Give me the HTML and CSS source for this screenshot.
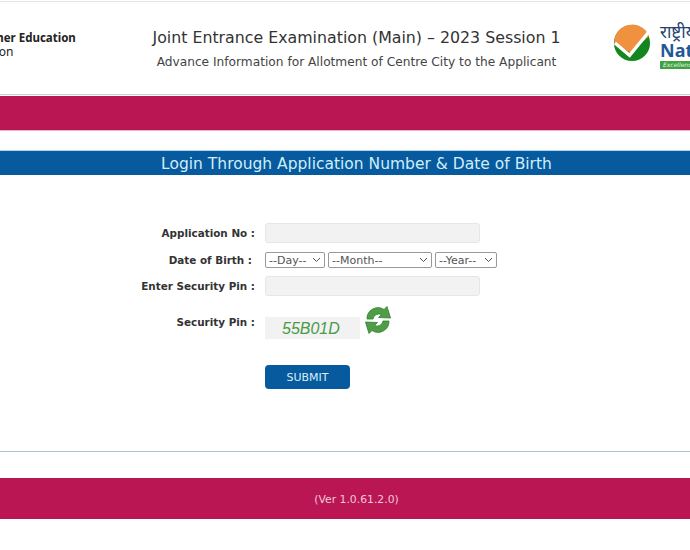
FILE: index.html
```html
<!DOCTYPE html>
<html lang="en">
<head>
  <meta charset="UTF-8">
  <title>JEE (Main) 2023 Session 1</title>
  <link rel="stylesheet" href="styles.css">
</head>

<body>

  <header class="top-header">
    <div class="ministry">
      <div class="ministry-text">
        <div class="dept">Department of Higher Education</div>
        <div class="min">Ministry of Education</div>
      </div>
    </div>
    <div class="exam-title">
      <h1>Joint Entrance Examination (Main) – 2023 Session 1</h1>
      <p>Advance Information for Allotment of Centre City to the Applicant</p>
    </div>
    <div class="nta-logo">
      <svg class="nta-mark" viewBox="0 0 40 40" width="38" height="38">
        <circle cx="20" cy="20" r="19" fill="#14861f"/>
        <path d="M1.200 19.500 A19 19 0 0 1 38 13 L18 30 Z" fill="#f0913f"/>
        <path d="M2 20 L17.500 33 L38 8" fill="none" stroke="#fff" stroke-width="3.400"/>
      </svg>
      <div class="nta-text">
        <div class="nta-hindi">राष्ट्रीय परीक्षा</div>
        <div class="nta-name">National Testing</div>
        <div class="nta-tag">Excellence in Assessment</div>
      </div>
    </div>
  </header>

  <div class="pink-bar"></div>

  <div class="login-title">Login Through Application Number &amp; Date of Birth</div>

  <form class="login-form">
    <div class="form-row">
      <label>Application No :</label>
      <input type="text" class="text-box">
    </div>
    <div class="form-row row-dob">
      <label class="label-dob">Date of Birth :</label>
      <div class="dob-selects">
        <select class="sel-day"><option>--Day--</option></select>
        <select class="sel-month"><option>--Month--</option></select>
        <select class="sel-year"><option>--Year--</option></select>
      </div>
    </div>
    <div class="form-row">
      <label>Enter Security Pin :</label>
      <input type="text" class="text-box">
    </div>
    <div class="form-row row-captcha">
      <label>Security Pin :</label>
      <div class="captcha">55B01D</div>
      <svg class="refresh" viewBox="0 0 28 28" width="28" height="28">
        <path d="M3 13 A11 11 0 0 1 20 3.500 L23 .5 L26.500 12 L14.500 11.500 L17.500 8.500 A6 6 0 0 0 9 13 Z" fill="#4f9e46" stroke="#2f7d32" stroke-width=".8"/>
        <path d="M25 15 A11 11 0 0 1 8 24.500 L5 27.500 L1.500 16 L13.500 16.500 L10.500 19.500 A6 6 0 0 0 19 15 Z" fill="#4f9e46" stroke="#2f7d32" stroke-width=".8"/>
      </svg>
    </div>
    <div class="form-row row-submit">
      <label></label>
      <button type="button" class="submit-btn">SUBMIT</button>
    </div>
  </form>

  <hr class="form-end">

  <div class="footer">(Ver 1.0.61.2.0)</div>

</body>
</html>
```

FILE: styles.css
```css
html, body {
  overflow: hidden;
}

body {
  font-family: 'DejaVu Sans', Verdana, sans-serif;
  background: #fff;
  margin: 0;
  padding: 0;
  color: #333;
}

.top-header {
  display: flex;
  height: 92px;
  margin-top: 1px;
  border-top: 1px solid #e4e4e4;
  border-bottom: 1px solid #ccc;
}

.ministry {
  width: 77px;
  overflow: hidden;
}

.ministry-text {
  margin: 29px 0 0 -111px;
  width: 200px;
  font-family: 'Noto Sans', sans-serif;
  font-size: 11.5px;
  line-height: 14px;
  color: #222;
}

.dept {
  font-weight: bold;
}

.min {
  margin-left: 5px;
  font-size: 12px;
}

.exam-title {
  width: 483px;
  margin-left: 38px;
  padding-top: 26px;
  text-align: center;
}

.exam-title h1 {
  margin: 0;
  font-size: 15.8px;
  font-weight: normal;
  line-height: 20px;
  color: #333;
}

.exam-title p {
  margin: 6px 0 0;
  font-size: 12.2px;
  line-height: 16px;
  color: #444;
}

.nta-logo {
  flex: 1;
  display: flex;
  min-width: 0;
  overflow: hidden;
  margin-left: 15px;
  padding-top: 21px;
}

.nta-mark {
  flex: none;
  margin: 1px 9px 0 0;
}

.nta-text {
  flex: none;
  white-space: nowrap;
}

.nta-hindi {
  font-family: 'Noto Sans', sans-serif;
  font-size: 17px;
  line-height: 17px;
  color: #24426e;
}

.nta-name {
  font-family: 'Noto Sans', sans-serif;
  font-size: 18px;
  font-weight: bold;
  line-height: 20px;
  color: #1f5a96;
}

.nta-tag {
  margin-top: 1px;
  width: 120px;
  background: #3fa142;
  color: #e8f5e4;
  font-size: 6px;
  font-style: italic;
  line-height: 8px;
  padding-left: 3px;
}

.pink-bar {
  height: 34px;
  margin-top: 1px;
  background: #bb1654;
  border-bottom: 1px solid #e9b3c8;
}

.login-title {
  margin-top: 19px;
  height: 24px;
  line-height: 26px;
  padding-left: 23px;
  background: #075a9e;
  border-top: 1px solid #a9d8ee;
  color: #cfeefa;
  text-align: center;
  font-size: 15.5px;
}

.login-form {
  padding-top: 48px;
  height: 228px;
}

.form-row {
  display: flex;
  align-items: center;
  margin-bottom: 9px;
}

.form-row label {
  flex: none;
  width: 255px;
  margin-right: 10px;
  text-align: right;
  font-size: 10.4px;
  font-weight: bold;
  color: #333;
}

.form-row .label-dob {
  width: 252px;
  margin-right: 13px;
}

.row-dob {
  margin-bottom: 8px;
}

.text-box {
  width: 215px;
  height: 20px;
  box-sizing: border-box;
  border: 1px solid #e6e6e6;
  border-radius: 3px;
  background: #f2f2f2;
}

.dob-selects {
  display: flex;
  gap: 3px;
}

.dob-selects select {
  appearance: none;
  height: 16px;
  padding: 0 0 0 3px;
  box-sizing: border-box;
  border: 1px solid #999;
  border-radius: 2px;
  background: #fff url("data:image/svg+xml,%3Csvg xmlns='http://www.w3.org/2000/svg' width='9' height='6'%3E%3Cpath d='M1 1l3.500 3.500L8 1' fill='none' stroke='%23555'/%3E%3C/svg%3E") no-repeat right 3px center;
  font-family: 'DejaVu Sans', sans-serif;
  font-size: 11px;
  color: #555;
}

.sel-day {
  width: 60px;
}

.sel-month {
  width: 104px;
}

.sel-year {
  width: 62px;
}

.row-captcha {
  align-items: flex-start;
  margin-top: 10px;
  margin-bottom: 26px;
}

.row-captcha label {
  margin-top: 10px;
}

.captcha {
  width: 95px;
  height: 22px;
  margin-top: 11px;
  background: #f2f2f2;
  color: #4a9a4a;
  font-family: 'Liberation Sans', sans-serif;
  font-size: 16px;
  font-style: italic;
  line-height: 24px;
  text-indent: 17px;
}

.refresh {
  margin-left: 4px;
}

.submit-btn {
  width: 85px;
  height: 24px;
  border: none;
  border-radius: 4px;
  background: #075a9e;
  color: #d8eefa;
  font-family: 'DejaVu Sans', sans-serif;
  font-size: 11px;
}

.form-end {
  margin: 0;
  border: none;
  border-top: 1px solid #b4c4cc;
}

.footer {
  margin-top: 26px;
  height: 41px;
  line-height: 44px;
  padding-left: 23px;
  background: #bb1654;
  color: #f0c8d8;
  text-align: center;
  font-size: 10.8px;
}
```
